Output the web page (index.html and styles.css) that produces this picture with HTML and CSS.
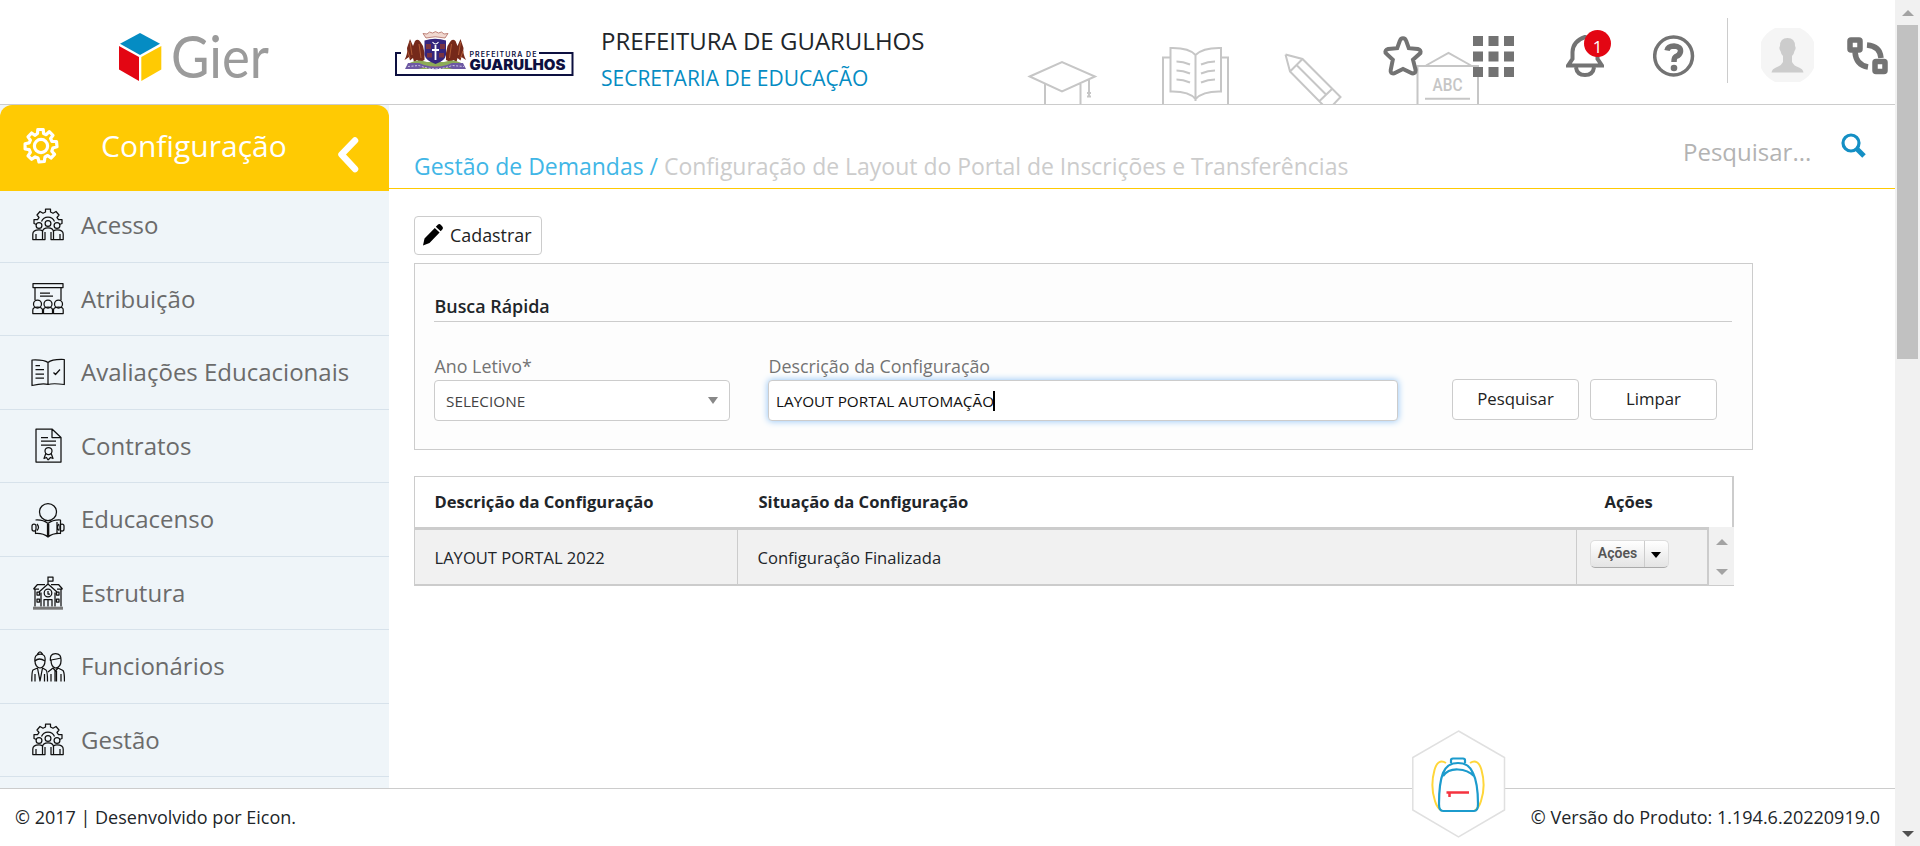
FILE: index.html
```html
<!DOCTYPE html>
<html lang="pt-BR">
<head>
<meta charset="utf-8">
<title>Gier - Configuração de Layout do Portal</title>
<link rel="stylesheet" href="styles.css">
</head>
<body>
<svg class="defs" width="0" height="0">
  <defs>
    <symbol id="team" viewBox="0 0 34 36">
      <path d="M5.500 17.500L3 16.500V12.500H6.500L8 10.500L6 8L9 4.500L12 6.200L14.500 5V2H19.500V5L22 6.200L25 4.500L28 8L26 10.500L27.500 12.500H31V16.500L28.500 17.500M10.500 14.500A7 7 0 0 1 23.500 14.500"/>
      <circle cx="17" cy="16.500" r="2.900"/><circle cx="8" cy="18.500" r="2.900"/><circle cx="26" cy="18.500" r="2.900"/>
      <path d="M11.500 32.500V25Q11.500 20.800 17 20.800T22.500 25V32.500H20V25M14 25V32.500H1.800V27Q1.800 22.800 8 22.800Q10 22.800 11.500 24M5 27V32.500M22.500 24Q24 22.800 26 22.800Q32.200 22.800 32.200 27V32.500H20M29 27V32.500"/>
    </symbol>
  </defs>
</svg>
<div class="page">
  <header class="topbar">
    <svg class="brand" width="160" height="84" viewBox="0 -12 160 84">
      <path fill="#058cc3" d="M21 5L41 15.700L21 27L1 15.700Z"/>
      <path fill="#e30613" d="M0 18L20 29V53L0 41.500Z"/>
      <path fill="#ffca03" d="M42.300 18L22.300 29V53L42.300 41.500Z"/>
      <text class="brand-name" x="52" y="50" textLength="98" lengthAdjust="spacingAndGlyphs">Gier</text>
    </svg>
    <svg class="city" width="180" height="48" viewBox="0 0 180 48">
      <path fill="none" stroke="#0d1040" stroke-width="2" d="M6 22H1V44H177.500V22H144"/>
      <g id="eagle">
        <path fill="#75291a" d="M20 10Q23 7 25.500 11L28 15L29.500 22V29L25 31L22 29L19 31L18 27L15 29.500L14 26L9.500 29Q13 22 12 17L15 8L18 15Z"/>
        <path fill="none" stroke="#b8613a" stroke-width=".9" d="M15 11L17 24M12.500 20L15 27M24 13L26 27"/>
      </g>
      <use href="#eagle" transform="translate(80.500 0) scale(-1 1)"/>
      <path fill="#8cab57" d="M13 33Q22 27 32 31H49Q59 27 68 33L60 38H22Z"/>
      <path fill="#c99a45" d="M26 35H55V37H26Z"/>
      <path fill="#35257d" d="M29.500 9.500Q40 6 51 9.500V24Q50 30 40.500 33Q31 30 29.500 24Z"/>
      <path fill="#7a3442" d="M31 13H36V18H31ZM45 13H50V18H45ZM32 22H37V26.500H32ZM44 22H49V26.500H44Z"/>
      <path fill="none" stroke="#fff" stroke-width="1.800" d="M40.500 14V29M37 19H44"/>
      <path fill="none" stroke="#fff" stroke-width="1.100" d="M37.500 11Q40.500 15 43.500 11"/>
      <path fill="#f0d8d0" stroke="#b06a60" stroke-width=".8" d="M31 7L28 2.500L32 3L34.500 1L37.500 2L40.500 .600L43.500 2L46.500 1L49 3L53 2.500L50 7Q40 4.500 31 7Z"/>
      <path fill="#6d59a3" d="M13 32L24 32L29 34Q40.500 37 52 34L57 32H68L71 38H58L52 36.500Q40.500 40 29 36.500L23 38H10Z"/>
      <path fill="none" stroke="#d9d3ee" stroke-width=".9" stroke-dasharray="2 1.500" d="M13 35.500L24 34.500Q40.500 41 57 34.500L69 35.500"/>
      <text class="city-small" x="74.500" y="26" textLength="67" lengthAdjust="spacing">PREFEITURA DE</text>
      <text class="city-big" x="74.500" y="38.700" textLength="96" lengthAdjust="spacingAndGlyphs">GUARULHOS</text>
    </svg>
    <div class="entity">
      <div class="entity-name">PREFEITURA DE GUARULHOS</div>
      <div class="entity-unit">SECRETARIA DE EDUCAÇÃO</div>
    </div>
    <svg class="school-art" width="460" height="62" viewBox="1025 42 460 62">
      <path d="M1029.700 76.500L1062 62L1095 76.500L1062 91.500ZM1045 84V105M1080.500 84V105M1089 80V96M1087 93H1091M1087 96.500H1091"/>
      <path d="M1195.500 55Q1189 47.500 1170.500 48V91.500Q1189 91 1195.500 99Q1203 91 1221 91.500V48Q1203 47.500 1195.500 55ZM1195.500 55V101M1170 57.500H1163V105M1222 57.500H1228V105M1176.500 61.500Q1183 61.500 1190 64.500M1176.500 70.500Q1183 70.500 1190 73.500M1176.500 79.500Q1183 79.500 1190 82.500M1215 61.500Q1208 61.500 1201 64.500M1215 70.500Q1208 70.500 1201 73.500M1215 79.500Q1208 79.500 1201 82.500"/>
      <path d="M1285.500 54.500L1302.500 59L1340.500 97L1332 106M1285.500 54.500L1290 71.500L1324 106M1302.500 59L1290 71.500M1297 65.500L1326 94.500M1332 89L1319 101.500"/>
      <path d="M1417.500 105V66H1478V105M1426 65.500L1448.500 53L1471 65.500M1425 98.700H1470"/>
      <text class="abc" x="1432.500" y="91" textLength="30" lengthAdjust="spacingAndGlyphs">ABC</text>
    </svg>
    <nav class="tools">
      <svg class="tool star" width="42" height="42" viewBox="0 0 42 42"><path d="M21 3.200Q23.400 3.200 24.200 6L26.800 13.200L35.800 14Q39.400 15 38.400 18L31 24.700L33.600 35Q33.600 39 30 38.300L21 34L12.200 38.300Q8 39 8.700 35L10.800 24.700L3.600 18Q2.600 15 6.200 14L15.200 13.200L17.800 6Q18.600 3.200 21 3.200Z"/></svg>
      <svg class="tool grid" width="41" height="41" viewBox="0 0 41 41"><path d="M0 0H10V10H0ZM15.500 0H25.500V10H15.500ZM31 0H41V10H31ZM0 15.500H10V25.500H0ZM15.500 15.500H25.500V25.500H15.500ZM31 15.500H41V25.500H31ZM0 31H10V41H0ZM15.500 31H25.500V41H15.500ZM31 31H41V41H31Z"/></svg>
      <div class="bell-box">
        <svg class="tool bell" width="38" height="42" viewBox="0 0 38 42"><path d="M2 30.500H36L31.500 24V17Q31 6 19 2Q7 6 6.500 17V24ZM10 32.500Q11 40 19 40T28 32.500"/></svg>
        <span class="badge">1</span>
      </div>
      <svg class="tool help" width="42" height="42" viewBox="0 0 42 42"><circle cx="20.600" cy="21" r="18.900"/><path class="mark" d="M14 15.500Q15 11 21 11Q28 11.500 27.500 16.500Q27 20 23 21.500Q21 22.500 21 27"/><circle class="dot" cx="21" cy="33" r="3.300"/></svg>
      <span class="divider"></span>
      <svg class="avatar" width="53" height="54" viewBox="0 0 53 54"><path fill="#f5f5f5" d="M14 0H39Q49 5 53 14V40Q49 49 39 54H14Q4 49 0 40V14Q4 5 14 0Z"/><path fill="#ccc" d="M26.500 10Q34 10 34 18Q35.500 20 33.500 23Q33 26 31 28V34Q33 38 38 39.500Q42 41 42.500 44.500H10.500Q11 41 15 39.500Q20 38 22 34V28Q20 26 19.500 23Q17.500 20 19 18Q19 10 26.500 10Z"/></svg>
      <svg class="tool switch" width="42" height="40" viewBox="0 0 42 40"><rect x="3" y="5" width="10" height="10" rx="1"/><rect x="28" y="26.500" width="10" height="10" rx="1"/><path d="M8 17Q9 30 21 32M20 10Q33 11 34 23"/></svg>
    </nav>
  </header>

  <div class="body">
    <aside class="sidebar">
      <div class="menu-head">
        <svg width="38" height="38" viewBox="0 0 38 38" class="gear"><path d="M15.500 6.500L15.800 2.500H21.200L21.600 6.600L24.200 7.700L27.300 4.700L31 8.300L28.600 11.500L29.900 14.300L34.500 14.500L35 19.800L30.900 21L29.800 24.200L32.600 27.400L29 31L25.700 28.500L23 30L22.300 34.500L17 35L16 31L13.200 29.900L9.700 32.300L6 28.800L8.400 25.400L7.200 22.600L3.100 22V16.800L7.200 15.900L8.400 13.200L6 9.800L9.600 6L12.800 8.300Z"/><circle cx="19" cy="19" r="6.600"/></svg>
        <span class="menu-title">Configuração</span>
        <svg width="24" height="38" viewBox="0 0 24 38" class="back"><path d="M19 4.500L5.500 18.500L19 33"/></svg>
      </div>
      <a class="item"><svg class="ico" width="34" height="36"><use href="#team"/></svg>Acesso</a>
      <a class="item"><svg class="ico" width="34" height="36" viewBox="0 0 34 36"><path d="M2 2.500H32V6.500H2ZM4 6.500V19M30 6.500V19M9 12H19M9 15H22M1.800 32.500V29Q1.800 26 6.500 26T11.500 29V32.500ZM12.500 32.500V29Q12.500 26 17 26T21.500 29V32.500ZM22.500 32.500V29Q22.500 26 27.500 26T32.200 29V32.500Z"/><circle cx="6.500" cy="23" r="4"/><circle cx="17" cy="23" r="4"/><circle cx="27.500" cy="23" r="4"/></svg>Atribuição</a>
      <a class="item"><svg class="ico" width="34" height="36" viewBox="0 0 34 36"><path d="M17 7.500Q13 4.500 1 5V30.500Q12 28 17 29.500Q22 28 33.300 29.500V4.500Q21 4 17 7.500ZM17 7.500V29M4.500 10.500H9M4.500 14.500H13M4.500 19H13M4.500 23H13M22.500 17.500L24.500 19.500L29 14.500"/></svg>Avaliações Educacionais</a>
      <a class="item"><svg class="ico" width="34" height="36" viewBox="0 0 34 36"><path d="M5 1H21L30 9.500V34H5ZM21 1V9.500H30M10 9.500H17M10 13H25M10 17H25M15 25L13 30.500L15.500 29.500L17 32M20 25L22 30.500L19.500 29.500L17 32"/><circle cx="17.500" cy="23" r="3.500"/></svg>Contratos</a>
      <a class="item"><svg class="ico" width="34" height="36" viewBox="0 0 34 36"><circle cx="17" cy="10" r="8.500"/><path d="M4.500 18Q12 17.500 17 21.500Q22 17.500 29.500 18V31.500Q22 31 17 35Q12 31 4.500 31.500V29M16.500 22V34M17.700 22V34M6 22Q9 25.500 6 28.500M28 22Q25 25.500 28 28.500M26 20V31"/><rect x="1" y="22" width="4" height="7" rx="2"/><rect x="29" y="22" width="4" height="7" rx="2"/></svg>Educacenso</a>
      <a class="item"><svg class="ico" width="34" height="36" viewBox="0 0 34 36"><path d="M17 9V1.500M17 2H22V6H17M8 17L17 9L26 17M10 17.500V31.500M24 17.500V31.500M4 14V31.500M30 14V31.500M2.500 14L6.500 9.500H14M31.500 14L27.500 9.500H20M2.500 14H8M26 14H31.500M13 31.500V24.500H21V31.500M17 25V31.500M6 17H8.500V20H6ZM6 24H8.500V27H6ZM25.500 17H28V20H25.500ZM25.500 24H28V27H25.500ZM17 16V19H19"/><circle cx="17" cy="18" r="3.800"/><path class="ground" d="M2 33.200H32"/></svg>Estrutura</a>
      <a class="item"><svg class="ico" width="34" height="36" viewBox="0 0 34 36"><path d="M4 13Q3 5 9 5T14 12Q14 18 9 19Q4 18 4 12Q8 8 14 12M6.500 5Q9 .500 11.500 5M6.500 19L2 21Q.800 22 .800 32.500M11.500 19L15 21Q16.500 22 16.500 32.500M6.500 19L9 32L11.500 19M4 25V32.500M13.500 25V32.500M19.500 12Q18.500 4.500 24.500 4.500T30 12Q30 18 24.500 19Q20 18 20 11Q26 10 30 9M17 23L22 19M27 19L32 21.500Q33.500 23 33.500 32.500M22 19L24.500 22L27 19M24 22V32.500M25.500 22V32.500M20 25V32.500M30 25V32.500"/></svg>Funcionários</a>
      <a class="item"><svg class="ico" width="34" height="36"><use href="#team"/></svg>Gestão</a>
    </aside>

    <main class="main">
      <div class="crumbs">
        <div class="crumb-text"><span class="crumb-root">Gestão de Demandas /</span> <span class="crumb-page">Configuração de Layout do Portal de Inscrições e Transferências</span></div>
        <div class="search"><span class="search-text">Pesquisar...</span>
          <svg width="26" height="26" viewBox="0 0 26 26"><circle cx="10" cy="10" r="8"/><path d="M16 16L23 23"/></svg>
        </div>
      </div>
      <div class="content">
        <button class="btn add"><svg width="22" height="23" viewBox="0 0 22 23"><path d="M16 1.500Q17.500 .500 19 2L20.500 3.800Q21.500 5 20.500 6.300L18.700 8.300L13.800 3.800ZM12.800 5L17.600 9.500L7.500 20L1 22.500L2.500 15.500Z"/></svg><span class="add-label">Cadastrar</span></button>
        <section class="panel">
          <h2 class="panel-title">Busca Rápida</h2>
          <div class="form">
            <div class="field year"><label class="label">Ano Letivo*</label><div class="select"><span class="select-text">SELECIONE</span><i class="tri"></i></div></div>
            <div class="field desc"><label class="label">Descrição da Configuração</label><div class="input"><span class="input-text">LAYOUT PORTAL AUTOMAÇÃO</span><i class="caret"></i></div></div>
            <div class="buttons"><button class="btn">Pesquisar</button><button class="btn">Limpar</button></div>
          </div>
        </section>
        <section class="table">
          <div class="thead"><div class="c1">Descrição da Configuração</div><div class="c2">Situação da Configuração</div><div class="c3">Ações</div></div>
          <div class="tbody">
            <div class="row"><div class="c1">LAYOUT PORTAL 2022</div><div class="c2">Configuração Finalizada</div><div class="c3"><span class="split"><b class="split-label">Ações</b><i class="split-arrow"></i></span></div></div>
            <div class="mini-scroll"><i class="up"></i><i class="down"></i></div>
          </div>
        </section>
      </div>
    </main>
  </div>

  <footer class="footer">
    <span class="copy">© 2017 | Desenvolvido por Eicon.</span>
    <span class="version">© Versão do Produto: 1.194.6.20220919.0</span>
    <svg class="bag" width="94" height="108" viewBox="0 0 94 108">
      <path fill="#fff" stroke="#e0e0e0" stroke-width="1.500" d="M46.500 1L92.500 27.500V80L46.500 107L.800 80V27.500Z"/>
      <g fill="none">
        <path stroke="#ffd63a" stroke-width="2" d="M34 33Q26 28 22.500 40Q18 56 23 71Q25 78 30 81M58 33Q66 28 69.500 40Q74 56 69 71Q67 78 62 81"/>
        <path stroke="#1c9bcd" stroke-width="2.200" d="M39 33V30Q39 28.500 41 28.500H51Q53 28.500 53 30V33M31 81Q27 81 27 74Q27 53 31 43Q35 33 46 33T61 43Q66 53 66 74Q66 81 62 81ZM31 46Q36 39 46 39.500T62 46"/>
        <path stroke="#f5333f" stroke-width="2.500" d="M34.500 62.500H57M37.500 63V67"/>
      </g>
    </svg>
  </footer>
</div>
<div class="scrollbar"><i class="up"></i><div class="thumb"></div><i class="down"></i></div>
</body>
</html>
```

FILE: styles.css
```css
* { box-sizing: border-box; }
body { margin: 0; width: 1920px; height: 846px; overflow: hidden; display: flex; background: #fff; color: #212529; font-family: "Open Sans", sans-serif; }
.defs { position: absolute; }
.page { width: 1895px; height: 846px; display: flex; flex-direction: column; position: relative; }

.topbar { height: 105px; flex: none; border-bottom: 1px solid #ccc; display: flex; align-items: flex-start; position: relative; }
.brand { margin: 16px 0 0 119px; }
.brand-name { font: 400 58px Lato, sans-serif; fill: #9b9b9b; }
.city { margin: 31px 0 0 116px; }
.city-small { font: 600 7px Inter, sans-serif; fill: #0d1040; }
.city-big { font: 900 14px Inter, sans-serif; fill: #0d1040; }
.entity { margin: 24px 0 0 26px; white-space: nowrap; }
.entity-name { font-size: 24px; line-height: 34px; }
.entity-unit { font-size: 21px; line-height: 34px; margin-top: 3px; color: #058cc3; }
.school-art { position: absolute; left: 1025px; top: 42px; fill: none; stroke: #c6c6c6; stroke-width: 2; }
.abc { font: 500 17.500px Roboto, sans-serif; fill: #c6c6c6; stroke: none; }
.tools { position: absolute; left: 1382px; top: 0; height: 104px; display: flex; align-items: flex-start; }
.tool { fill: none; stroke: #737373; stroke-width: 4; margin-top: 35px; }
.grid { fill: #737373; stroke: none; margin: 36px 0 0 49px; }
.bell-box { position: relative; margin-left: 52px; width: 38px; }
.badge { position: absolute; left: 18px; top: 30px; width: 27px; height: 27px; border-radius: 50%; background: #e30613; color: #fff; font-size: 17px; line-height: 33px; text-align: center; }
.help { margin-left: 49px; stroke-width: 3.500; }
.help .mark { stroke-width: 5.500; }
.help .dot { fill: #737373; stroke: none; }
.divider { width: 1px; height: 65px; margin: 18px 0 0 32px; background: #ccc; }
.avatar { margin: 28px 0 0 33px; }
.switch { margin: 35px 0 0 33px; stroke-width: 5.500; }

.body { flex: 1; min-height: 0; display: flex; overflow: hidden; }
.sidebar { width: 389px; flex: none; background: #eff5f9; overflow: hidden; }
.menu-head { height: 86px; background: #ffca03; border-radius: 12px 12px 0 0; display: flex; align-items: flex-start; color: #fff; }
.gear { margin: 22px 0 0 22px; fill: none; stroke: #fff; stroke-width: 3.200; stroke-linejoin: round; }
.menu-title { margin: 19px 0 0 41px; width: 190px; font-size: 30px; line-height: 44px; }
.back { margin: 31px 0 0 45px; fill: none; stroke: #fff; stroke-width: 6.500; stroke-linecap: round; stroke-linejoin: round; }
.item { height: 73.500px; border-bottom: 1px solid #d7e2eb; display: flex; align-items: center; gap: 16px; padding: 0 0 2px 31px; font-size: 24px; color: #6b6b6b; white-space: nowrap; }
.menu-head + .item { height: 71.900px; padding-bottom: 4px; }
.ico { margin-top: 2px; fill: none; stroke: #111; stroke-width: 1.250; stroke-linejoin: round; }
.ico .ground { stroke: #777; stroke-width: 3; }

.main { flex: 1; min-width: 0; }
.crumbs { height: 84px; border-bottom: 1px solid #ffca03; display: flex; justify-content: space-between; padding-left: 25px; }
.crumb-text { margin-top: 43px; font-size: 22.970px; line-height: 36px; color: #ccc; white-space: nowrap; }
.crumb-root { color: #41b6e6; }
.search { display: flex; width: 212px; height: 60px; }
.search-text { margin-top: 29px; width: 158px; font-size: 24px; line-height: 36px; color: #b3b3b3; }
.search svg { margin-top: 28px; fill: none; stroke: #148fc4; stroke-width: 3.200; }
.search path { stroke-width: 5; }
.content { padding: 27px 0 0 25px; }
.btn { font: 16.800px "Open Sans", sans-serif; color: #222; background: #fff; border: 1px solid #ccc; border-radius: 4px; width: 127px; height: 41px; padding: 0 0 2px; display: block; }
.add { width: 128px; height: 39px; display: flex; align-items: center; font-size: 17.900px; }
.add svg { margin: 0 6px 0 7px; }
.panel { margin-top: 8px; width: 1339px; height: 187px; border: 1px solid #ccc; background: #fdfdfd; padding: 29px 20px 0 19px; }
.panel-title { margin: 0; height: 29px; border-bottom: 1px solid #ccc; font-size: 17.900px; font-weight: 600; line-height: 26px; padding-left: .5px; }
.form { display: flex; padding-top: 31px; }
.label { display: block; font-size: 17.850px; line-height: 27px; color: #737373; white-space: nowrap; padding-left: .5px; }
.select, .input { height: 41px; border: 1px solid #ccc; border-radius: 4px; background: #fff; display: flex; align-items: center; font-size: 15.300px; }
.year { width: 296px; margin-right: 38px; }
.select { justify-content: space-between; padding: 0 11px; color: #444; }
.tri { border: 5px solid transparent; border-top: 7px solid #888; border-bottom: 0; margin-bottom: 1px; }
.desc { width: 630px; }
.input { padding-left: 7px; color: #111; box-shadow: 0 0 7px #8cc1f5; }
.caret { width: 2px; height: 20px; background: #000; margin-left: -1px; }
.buttons { display: flex; gap: 11px; margin: 26px 0 0 54px; }

.table { margin-top: 26px; width: 1320px; font-size: 16.570px; }
.thead { display: flex; height: 51px; border: 1px solid #ccc; border-right-width: 2px; border-bottom: 0; font-weight: 700; line-height: 49px; }
.thead .c1, .row .c1 { width: 323.500px; padding-left: 19.500px; }
.thead .c2, .row .c2 { width: 839px; padding-left: 20px; }
.thead .c3 { padding-left: 27px; }
.tbody { display: flex; height: 59px; }
.row { display: flex; width: 1295px; border: solid #ccc; border-width: 3px 2px 2px 1px; background: #f1f1f1; line-height: 55px; }
.row .c1, .row .c2 { border-right: 1px solid #ccc; }
.row .c1 { width: 323px; }
.row .c2 { padding-left: 19.500px; }
.row .c3 { padding: 10px 0 0 13px; }
.split { display: flex; width: 79px; height: 28px; border: 1px solid #ddd; border-bottom-color: #aaa; border-radius: 5px; background: linear-gradient(#fff, #e4e4e4); }
.split-label { width: 54px; border-right: 1px solid #ccc; font: 600 14px/25px Roboto, sans-serif; color: #555; text-align: center; }
.split-arrow { margin: 11px 0 0 6px; height: 0; border: 5px solid transparent; border-top: 6px solid #000; border-bottom: 0; }
.mini-scroll { width: 25px; background: #f1f1f1; border-bottom: 1px solid #ccc; display: flex; flex-direction: column; justify-content: space-between; align-items: center; padding: 12px 0 10px; }
.up { border: 6px solid transparent; border-bottom-color: #a3a3a3; border-top: 0; }
.down { border: 6px solid transparent; border-top-color: #a3a3a3; border-bottom: 0; }

.footer { height: 58px; flex: none; border-top: 1px solid #ccc; display: flex; justify-content: space-between; position: relative; font-size: 18px; line-height: 57px; padding: 0 15px; }
.bag { position: absolute; left: 1412px; top: -59px; }
.scrollbar { width: 25px; height: 846px; background: #f1f1f1; display: flex; flex-direction: column; align-items: center; padding: 10px 0 9px; }
.scrollbar .thumb { width: 21px; height: 334px; margin: 9px 0 auto; background: #c1c1c1; }
.scrollbar .down { border-top-color: #505050; }
```
